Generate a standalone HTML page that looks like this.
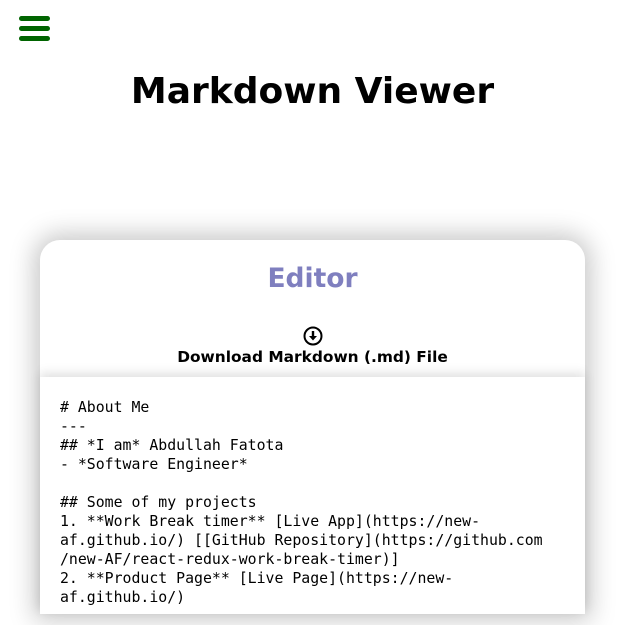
<!DOCTYPE html>
<html><head><style>
body{margin:0;width:625px;height:625px;background:#fff;overflow:hidden;position:relative;font-family:"DejaVu Sans","Liberation Sans",sans-serif}
.bars{position:absolute;left:19px;top:16px;width:31px}
.bars div{height:5px;background:#006400;border-radius:3px;margin-bottom:5px}
h1{position:absolute;top:71px;left:0;width:625px;text-align:center;margin:0;font-size:36px;font-weight:bold;color:#000}
.card{position:absolute;left:40px;top:240px;width:545px;height:374px;background:#fff;border-radius:20px 20px 0 0;box-shadow:0 0 25px 6px rgba(0,0,0,.22)}
.ed{position:absolute;top:23px;width:545px;text-align:center;font-size:26.5px;font-weight:bold;color:#7f7fbf}
.ic{position:absolute;left:263px;top:86px;width:20px;height:20px}
.dl{position:absolute;top:108px;width:545px;text-align:center;font-size:15.4px;font-weight:bold}
.ta{position:absolute;left:0;top:137px;width:545px;height:237px;background:#fff;box-shadow:0 -4px 10px rgba(0,0,0,.12)}
pre{margin:0;position:absolute;left:20px;top:21px;font-family:"DejaVu Sans Mono","Liberation Mono",monospace;font-size:14.85px;line-height:19px;color:#000}
</style></head><body>
<div class="bars"><div></div><div></div><div></div></div>
<h1>Markdown Viewer</h1>
<div class="card">
<div class="ed">Editor</div>
<svg class="ic" viewBox="0 0 20 20"><circle cx="10" cy="10" r="8.5" fill="none" stroke="#000" stroke-width="2"/><path d="M10 5v6" stroke="#000" stroke-width="2.4"/><path d="M6 10h8l-4 4.5z" fill="#000"/></svg>
<div class="dl">Download Markdown (.md) File</div>
<div class="ta"><pre># About Me
---
## *I am* Abdullah Fatota
- *Software Engineer*

## Some of my projects
1. **Work Break timer** [Live App](https://new-
af.github.io/) [[GitHub Repository](https://github.com
/new-AF/react-redux-work-break-timer)]
2. **Product Page** [Live Page](https://new-
af.github.io/)</pre></div>
</div>
</body></html>
